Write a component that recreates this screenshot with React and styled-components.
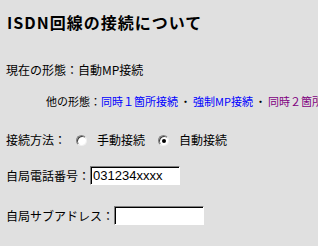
import React from "react";
import styled, { createGlobalStyle } from "styled-components";

const Global = createGlobalStyle`
  html, body {
    margin: 0;
    padding: 0;
    background: #e0e0e0;
    overflow: hidden;
  }
  body {
    font-family: "Noto Sans CJK JP", "Liberation Sans", sans-serif;
    color: #000;
  }
`;

const Page = styled.div`
  width: 318px;
  height: 246px;
  padding: 0 0 0 6px;
  box-sizing: border-box;
  overflow: hidden;
  background: #e0e0e0;
`;

const Title = styled.h1`
  margin: 12px 0 0 1px;
  font-size: 16px;
  line-height: 20px;
  font-weight: bold;
  letter-spacing: 1px;
`;

const Row = styled.div`
  display: flex;
  align-items: center;
  white-space: nowrap;
  font-size: ${(p) => p.$size || 12}px;
  line-height: ${(p) => p.$lh || 16}px;
  margin-top: ${(p) => p.$mt || 0}px;
  padding-left: ${(p) => p.$indent || 0}px;
`;

const Link = styled.a`
  color: ${(p) => (p.$visited ? "#800080" : "#0000ff")};
  text-decoration: none;
`;

const Sep = styled.span`
  padding: 0 2px;
`;

const Radio = styled.span`
  display: inline-block;
  position: relative;
  width: 9px;
  height: 9px;
  border-radius: 50%;
  background: #fff;
  border: 1px solid;
  border-color: #808080 #f0f0f0 #f0f0f0 #808080;
  box-shadow: inset 1px 1px 0 #404040;
  margin: 0 10px 0 ${(p) => p.$ml || 0}px;
  flex: none;
  &::after {
    content: "";
    display: ${(p) => (p.$checked ? "block" : "none")};
    position: absolute;
    left: 3px;
    top: 3px;
    width: 4px;
    height: 4px;
    border-radius: 50%;
    background: #000;
  }
`;

const TextBox = styled.div`
  box-sizing: border-box;
  width: 90px;
  height: 19px;
  background: #fff;
  border: 1px solid;
  border-color: #808080 #ffffff #ffffff #808080;
  box-shadow: inset 1px 1px 0 #000;
  font-family: "Liberation Sans", Arial, sans-serif;
  font-size: 13px;
  line-height: 17px;
  padding-left: 2px;
`;

export default function App() {
  return (
    <>
      <Global />
      <Page>
        <Title>ISDN回線の接続について</Title>
        <Row $mt={30}>現在の形態：自動MP接続</Row>
        <Row $size={11} $lh={14} $mt={16} $indent={40}>
          他の形態：
          <Link href="#">同時１箇所接続</Link>
          <Sep>・</Sep>
          <Link href="#">強制MP接続</Link>
          <Sep>・</Sep>
          <Link href="#" $visited>同時２箇所接続</Link>
        </Row>
        <Row $mt={24}>
          接続方法：
          <Radio $ml={10} />
          手動接続
          <Radio $ml={13} $checked />
          自動接続
        </Row>
        <Row $mt={18} $lh={19}>
          自局電話番号：
          <TextBox>031234xxxx</TextBox>
        </Row>
        <Row $mt={21} $lh={19}>
          自局サブアドレス：
          <TextBox />
        </Row>
      </Page>
    </>
  );
}
